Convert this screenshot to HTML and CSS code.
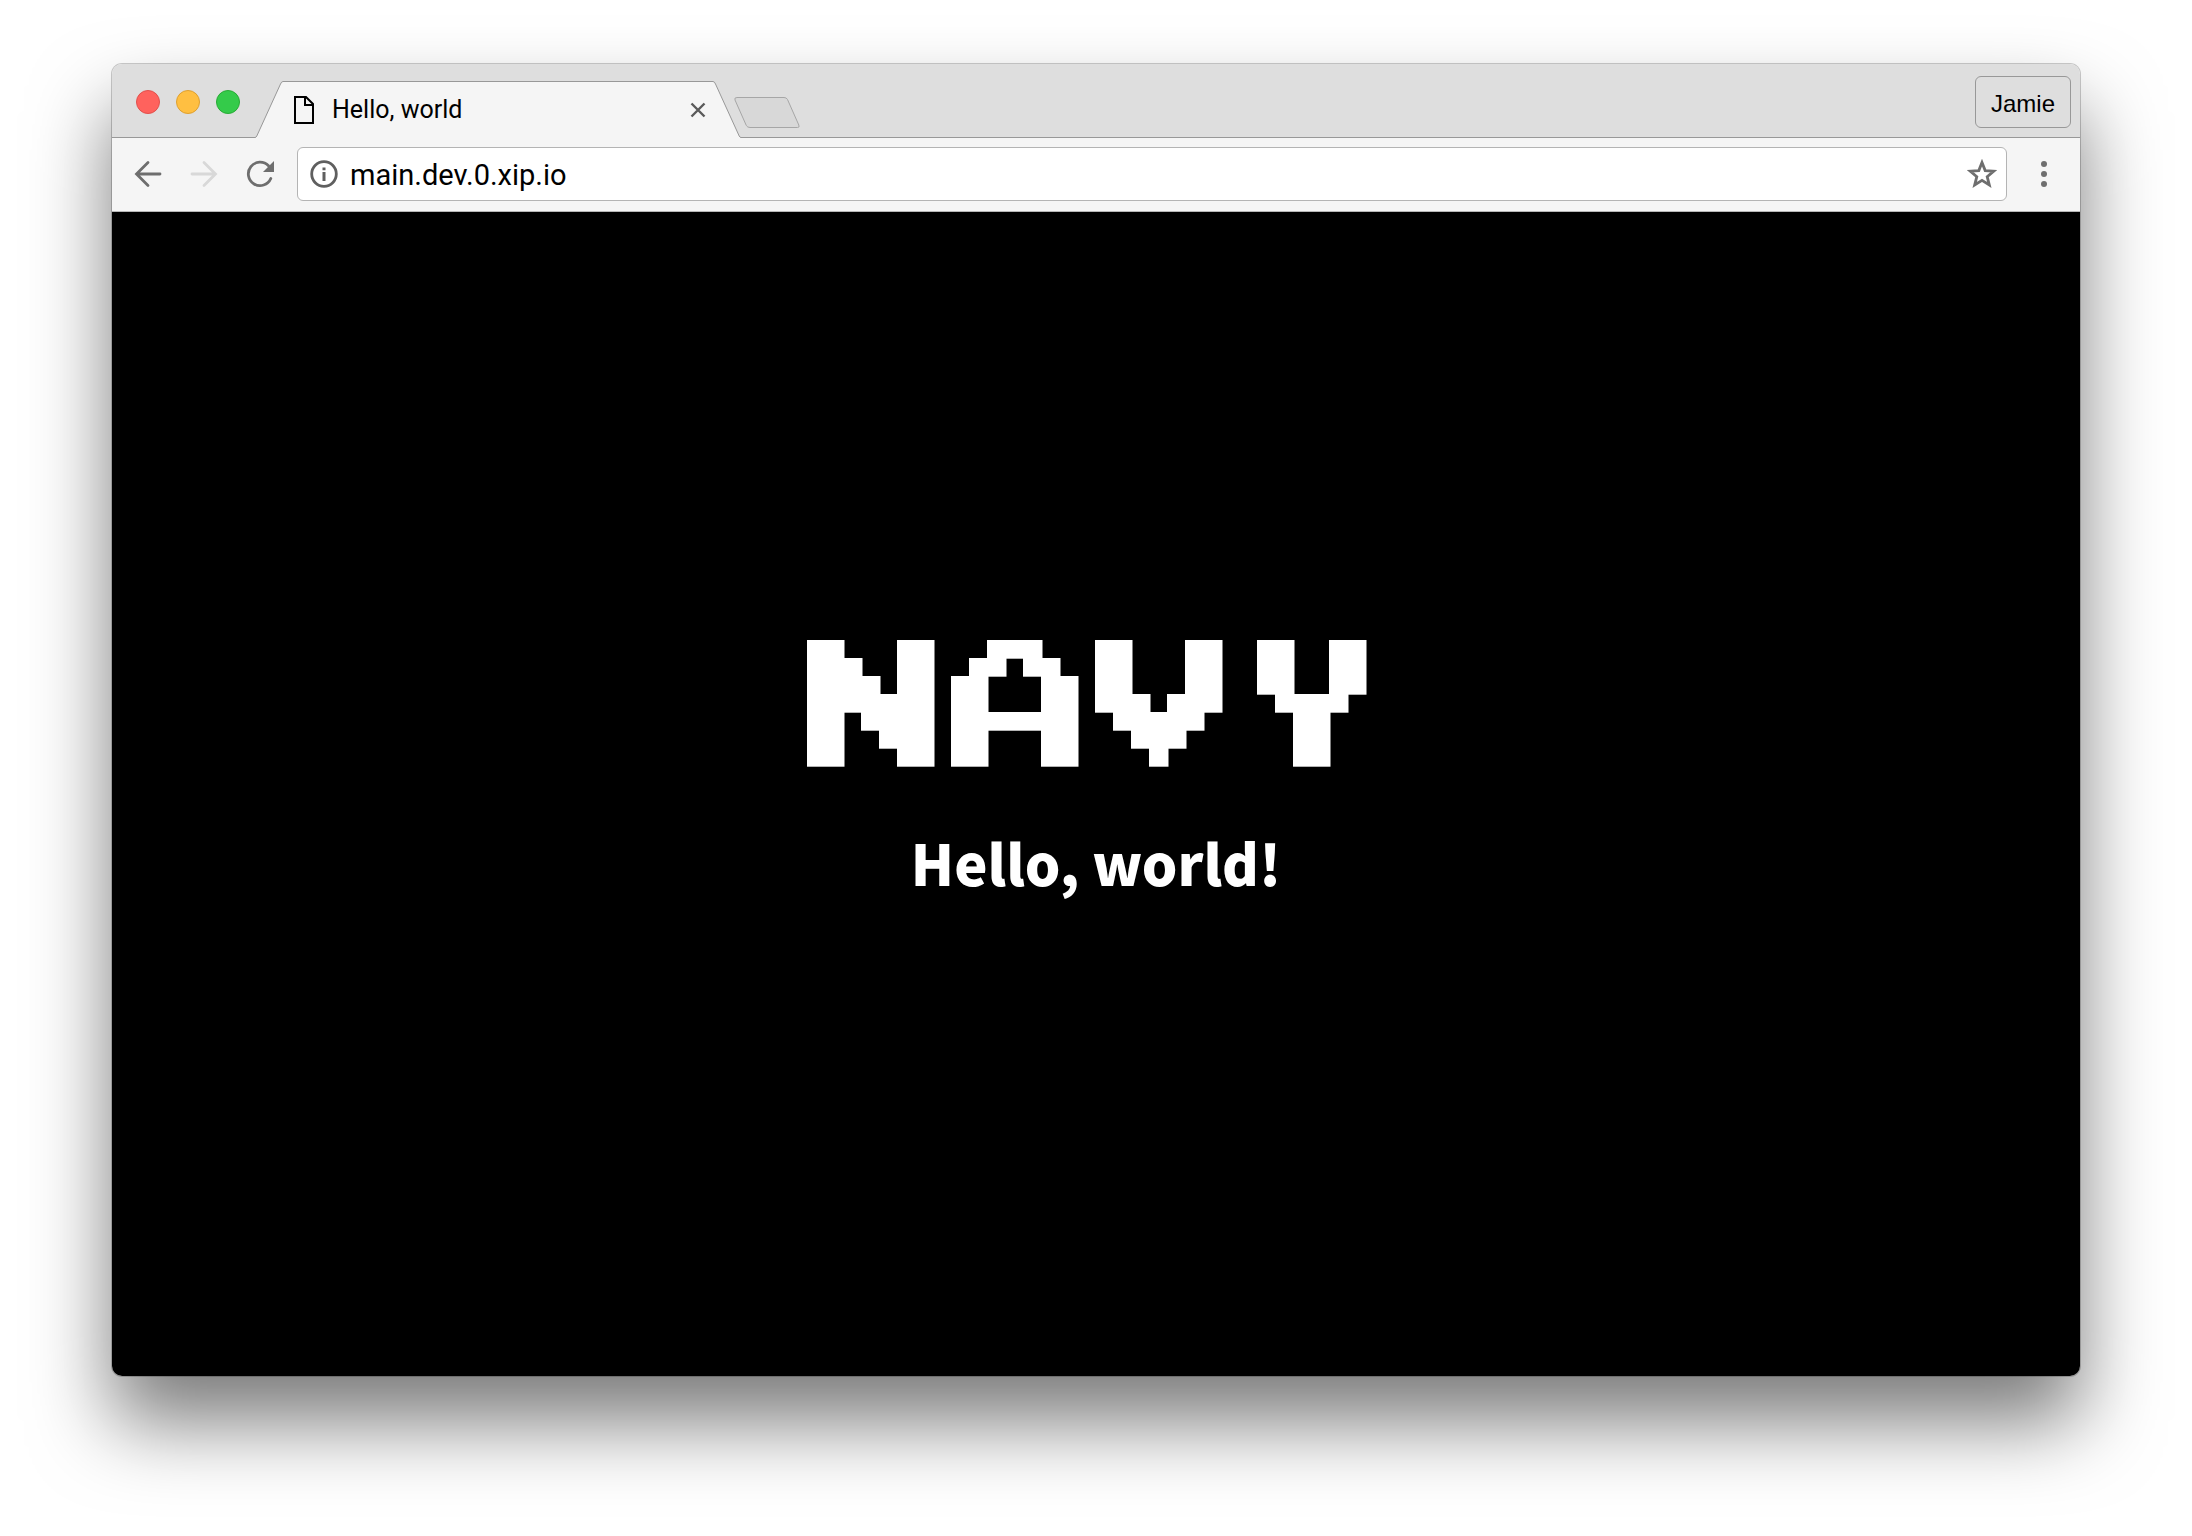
FILE: index.html
```html
<!DOCTYPE html>
<html lang="en">
<head>
<meta charset="utf-8">
<title>Hello, world</title>
<link rel="stylesheet" href="styles.css">
</head>
<body>
<div class="window">
  <header class="titlebar">
    <div class="lights">
      <button class="light light-close" aria-label="Close window"></button>
      <button class="light light-min" aria-label="Minimize window"></button>
      <button class="light light-max" aria-label="Zoom window"></button>
    </div>
    <div class="tab">
      <svg class="slope" width="28" height="57" viewBox="0 0 28 57" aria-hidden="true"><path d="M0 57V56.5Q1 56.500 1.800 55L25.500 3Q26.500 .5 28 .5V57Z" fill="#f5f5f5"/><path d="M0 56.500Q1 56.500 1.800 55L25.500 3Q26.500 .5 28 .5" fill="none" stroke="#989898"/></svg>
      <div class="tab-body">
        <svg class="tab-icon" width="20" height="28" viewBox="0 0 20 28" aria-hidden="true"><path d="M1 1H12L19 8V27H1Z" fill="none" stroke="#000" stroke-width="2"/><path d="M11 1V9H19" fill="none" stroke="#000" stroke-width="2"/></svg>
        <span class="tab-title">Hello, world</span>
        <button class="tab-close" aria-label="Close tab"><svg width="16" height="16" viewBox="0 0 16 16"><path d="M1.500 1.500L14.500 14.500M14.500 1.500L1.500 14.500" stroke="#5a5a5a" stroke-width="2.400"/></svg></button>
      </div>
      <svg class="slope" width="28" height="57" viewBox="0 0 28 57" aria-hidden="true"><path d="M28 57V56.500Q27 56.500 26.200 55L2.500 3Q1.500 .5 0 .5V57Z" fill="#f5f5f5"/><path d="M28 56.500Q27 56.500 26.200 55L2.500 3Q1.500 .5 0 .5" fill="none" stroke="#989898"/></svg>
    </div>
    <button class="new-tab" aria-label="New tab"><svg width="66" height="32" viewBox="0 0 66 32"><path d="M3 .5H50Q52.500 .5 53.500 2.500L64.800 28Q66 30.500 63.500 30.500H16Q13.500 30.500 12.300 28.500L1 3Q0 .5 3 .5Z" fill="#d8d8d8" stroke="#a6a6a6"/></svg></button>
    <button class="profile">Jamie</button>
  </header>
  <nav class="toolbar">
    <button class="tool" aria-label="Back"><svg width="28" height="28" viewBox="0 0 28 28"><path d="M26 14H3M14 2.500L2.500 14L14 25.500" fill="none" stroke="#6e6e6e" stroke-width="2.800" stroke-linecap="round"/></svg></button>
    <button class="tool" aria-label="Forward" disabled><svg width="28" height="28" viewBox="0 0 28 28"><path d="M2 14H25M14 2.500L25.500 14L14 25.500" fill="none" stroke="#d8d8d8" stroke-width="2.800" stroke-linecap="round"/></svg></button>
    <button class="tool" aria-label="Reload"><svg width="28" height="28" viewBox="0 0 28 28"><path d="M22.500 5.800A11.700 11.700 0 1 0 24.800 18.500" fill="none" stroke="#6e6e6e" stroke-width="2.800" stroke-linecap="round"/><path d="M28 1V12H17Z" fill="#6e6e6e"/></svg></button>
    <div class="omnibox">
      <button class="box-icon" aria-label="View site information"><svg width="28" height="28" viewBox="0 0 28 28"><circle cx="14" cy="14" r="12.300" fill="none" stroke="#5f5f5f" stroke-width="2.800"/><path d="M12.500 12H15.500V21H12.500ZM12.500 7.500H15.500V10.300H12.500Z" fill="#5f5f5f"/></svg></button>
      <input class="url" type="text" aria-label="Address" value="main.dev.0.xip.io">
      <button class="box-icon" aria-label="Bookmark this page"><svg width="30" height="30" viewBox="0 0 30 30"><path d="M15 3.500L18.200 11.600L26.800 12.200L20.200 17.700L22.300 26L15 21.400L7.700 26L9.800 17.700L3.200 12.200L11.800 11.600Z" fill="none" stroke="#6e6e6e" stroke-width="2.800"/></svg></button>
    </div>
    <button class="menu" aria-label="Menu"><svg width="6" height="26" viewBox="0 0 6 26"><g fill="#6e6e6e"><circle cx="3" cy="3" r="3"/><circle cx="3" cy="13" r="3"/><circle cx="3" cy="23" r="3"/></g></svg></button>
  </nav>
  <main class="page">
    <svg class="logo" width="578" height="128" viewBox="0 0 578 128" role="img" aria-label="NAVY">
      <g fill="#fff">
        <rect x="0" y="0" width="37.500" height="126.700"/><rect x="90" y="0" width="37.500" height="126.700"/>
        <rect x="36" y="18" width="19.500" height="54.700"/><rect x="54" y="36" width="19.500" height="54.700"/><rect x="72" y="54" width="19.500" height="54.700"/>
        <rect x="144" y="36" width="37.500" height="90.700"/><rect x="234" y="36" width="37.500" height="90.700"/>
        <rect x="162" y="18" width="37.500" height="18.700"/><rect x="216" y="18" width="37.500" height="18.700"/><rect x="180" y="0" width="55.500" height="18.700"/><rect x="180" y="72" width="55.500" height="18.700"/>
        <rect x="288" y="0" width="37.500" height="72.700"/><rect x="378" y="0" width="37.500" height="72.700"/>
        <rect x="324" y="54" width="19.500" height="18.700"/><rect x="360" y="54" width="19.500" height="18.700"/><rect x="306" y="72" width="91.500" height="18.700"/><rect x="324" y="90" width="55.500" height="18.700"/><rect x="342" y="108" width="19.500" height="18.700"/>
        <rect x="450" y="0" width="37.500" height="54.700"/><rect x="522" y="0" width="37.500" height="54.700"/><rect x="468" y="54" width="73.500" height="18.700"/><rect x="486" y="72" width="37.500" height="54.700"/>
      </g>
    </svg>
    <h1 class="greeting">Hello, world!</h1>
  </main>
</div>
</body>
</html>
```
FILE: styles.css
```css
* { box-sizing: border-box; }
body {
  margin: 0;
  padding: 64px 112px 160px;
  min-height: 100vh;
  display: flex;
  background: #fff;
  font-family: Roboto, sans-serif;
  color: #000;
}
button {
  padding: 0;
  border: 0;
  background: none;
  font: inherit;
  color: inherit;
  display: flex;
  align-items: center;
  justify-content: center;
}
svg { display: block; flex: none; }
.window {
  flex: 1;
  min-width: 0;
  display: flex;
  flex-direction: column;
  border-radius: 10px;
  box-shadow: 0 0 0 1px rgba(0, 0, 0, .2), 0 46px 80px rgba(0, 0, 0, .52);
}
.titlebar {
  height: 74px;
  display: flex;
  align-items: flex-end;
  background: #dedede;
  border-bottom: 1px solid #989898;
  border-radius: 10px 10px 0 0;
  padding: 0 9px 0 24px;
}
.lights { display: flex; gap: 16px; margin-bottom: 23px; }
.light { width: 24px; height: 24px; border-radius: 50%; border: 1px solid; }
.light-close { background: #ff625d; border-color: #e2504c; }
.light-min { background: #ffbf41; border-color: #dfa02f; }
.light-max { background: #34cb4a; border-color: #28ab35; }
.tab { display: flex; margin: 0 0 -1px 15px; width: 486px; }
.tab-body {
  flex: 1;
  display: flex;
  align-items: center;
  background: #f5f5f5;
  border-top: 1px solid #989898;
  padding: 0 7px 0 11px;
}
.tab-title { flex: 1; margin-left: 18px; font-size: 25px; line-height: 32px; }
.new-tab { margin: 0 0 8px -7px; }
.profile {
  width: 96px;
  height: 52px;
  margin: 0 0 9px auto;
  border: 1px solid #989898;
  border-radius: 6px;
  padding-top: 3px;
  font: 24px/32px "Liberation Sans", sans-serif;
}
.toolbar {
  height: 74px;
  display: flex;
  align-items: center;
  background: #f5f5f5;
  border-bottom: 1px solid #b6b6b6;
  padding: 0 24px 2px 22px;
}
.tool { width: 28px; height: 28px; margin-right: 28px; }
.omnibox {
  flex: 1;
  height: 54px;
  display: flex;
  align-items: center;
  margin-left: -5px;
  background: #fff;
  border: 1px solid #b4b4b4;
  border-radius: 6px;
  padding: 0 9px 0 12px;
}
.url {
  flex: 1;
  min-width: 0;
  margin: 0 12px;
  padding: 2px 0 0;
  border: 0;
  outline: 0;
  background: none;
  font: 29px/40px Roboto, sans-serif;
  color: #000;
}
.menu { width: 24px; height: 32px; margin-left: 25px; }
.page {
  flex: 1;
  display: flex;
  flex-direction: column;
  align-items: center;
  justify-content: center;
  gap: 50px;
  padding-bottom: 42px;
  background: #000;
  border-radius: 0 0 10px 10px;
}
.greeting {
  margin: 0;
  font: 900 56px/88px "Noto Sans CJK JP", sans-serif;
  color: #fff;
}
```
